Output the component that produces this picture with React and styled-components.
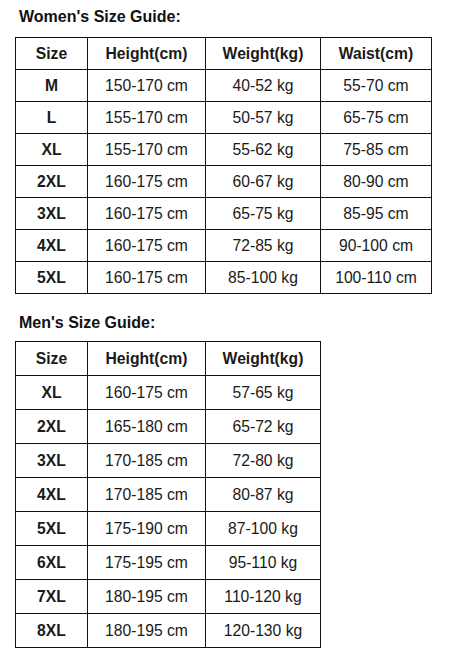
import styled, { createGlobalStyle } from 'styled-components'

const Global = createGlobalStyle`
  body {
    margin: 0;
    background: #fff;
    font-family: "Liberation Sans", Arial, sans-serif;
    color: #111;
  }
`

const women = {
  cols: ['Size', 'Height(cm)', 'Weight(kg)', 'Waist(cm)'],
  rows: [
    ['M', '150-170 cm', '40-52 kg', '55-70 cm'],
    ['L', '155-170 cm', '50-57 kg', '65-75 cm'],
    ['XL', '155-170 cm', '55-62 kg', '75-85 cm'],
    ['2XL', '160-175 cm', '60-67 kg', '80-90 cm'],
    ['3XL', '160-175 cm', '65-75 kg', '85-95 cm'],
    ['4XL', '160-175 cm', '72-85 kg', '90-100 cm'],
    ['5XL', '160-175 cm', '85-100 kg', '100-110 cm'],
  ],
}

const men = {
  cols: ['Size', 'Height(cm)', 'Weight(kg)'],
  rows: [
    ['XL', '160-175 cm', '57-65 kg'],
    ['2XL', '165-180 cm', '65-72 kg'],
    ['3XL', '170-185 cm', '72-80 kg'],
    ['4XL', '170-185 cm', '80-87 kg'],
    ['5XL', '175-190 cm', '87-100 kg'],
    ['6XL', '175-195 cm', '95-110 kg'],
    ['7XL', '180-195 cm', '110-120 kg'],
    ['8XL', '180-195 cm', '120-130 kg'],
  ],
}

const colWidths = [71, 117, 114, 110]

function SizeTable({ data, rowHeight }) {
  return (
    <Grid $cols={data.cols.length} $rowHeight={rowHeight}>
      {data.cols.map((c) => (
        <Cell key={c} $bold>{c}</Cell>
      ))}
      {data.rows.map((r) =>
        r.map((v, i) => (
          <Cell key={r[0] + i} $bold={i === 0}>{v}</Cell>
        ))
      )}
    </Grid>
  )
}

export default function App() {
  return (
    <Page>
      <Global />
      <Title>Women's Size Guide:</Title>
      <SizeTable data={women} rowHeight={31} />
      <Title $top={20}>Men's Size Guide:</Title>
      <SizeTable data={men} rowHeight={33} />
    </Page>
  )
}

const Page = styled.div`
  padding: 8px 0 0 15px;
`

const Title = styled.div`
  margin: ${(p) => p.$top || 0}px 0 0 4px;
  font-size: 16px;
  line-height: 18px;
  font-weight: 700;
  color: #111;
  height: 18px;
  margin-bottom: ${(p) => (p.$top ? 9 : 11)}px;
`

const Grid = styled.div`
  display: inline-grid;
  grid-template-columns: ${(p) => colWidths.slice(0, p.$cols).map((w) => w + 'px').join(' ')};
  grid-auto-rows: ${(p) => p.$rowHeight}px;
  gap: 1px;
  background: #111;
  border: 1px solid #111;
  vertical-align: top;
`

const Cell = styled.div`
  background: #fff;
  display: flex;
  align-items: center;
  justify-content: center;
  font-size: 15.7px;
  font-weight: ${(p) => (p.$bold ? 700 : 400)};
  color: #1a1a1a;
  white-space: nowrap;
`
